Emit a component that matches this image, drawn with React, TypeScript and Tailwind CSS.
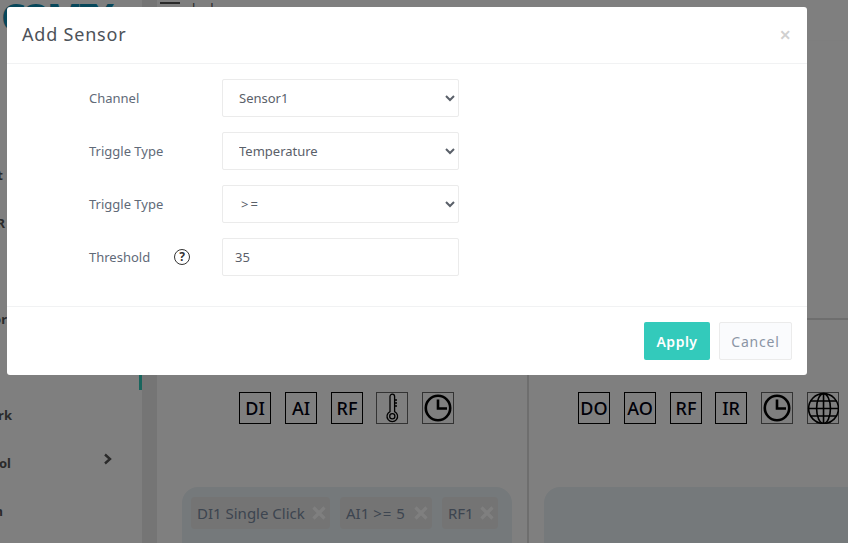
import React from 'react';

const font = { fontFamily: '"Noto Sans", sans-serif' };

// Bloc texte d'un déclencheur
const IconBox = ({ label, className = '' }: { label: string; className?: string }) => (
  <div className={`w-8 h-8 border border-black flex items-center justify-center text-[18px] leading-none font-medium text-[#00000f] ${className}`}>
    {label}
  </div>
);

const ImageBox = ({ children, className = '' }: { children: React.ReactNode; className?: string }) => (
  <div className={`w-8 h-8 border border-[#666666] ${className}`}>{children}</div>
);

const ClockIcon = () => (
  <svg viewBox="0 0 30 30" className="w-full h-full" fill="none" stroke="#000" strokeWidth="2.6">
    <circle cx="15" cy="15" r="12.2" />
    <path d="M15 6.5V15.5H24" />
  </svg>
);

const ThermoIcon = () => (
  <svg viewBox="0 0 30 30" className="w-full h-full" fill="none" stroke="#000" strokeWidth="1.3">
    <path d="M13 3.5a2.3 2.3 0 0 1 4.6 0V18.6a5.3 5.3 0 1 1-4.6 0Z" />
    <circle cx="15.3" cy="23.2" r="2.6" />
    <path d="M18 7h2M18 10h2M18 13h2" />
  </svg>
);

const GlobeIcon = () => (
  <svg viewBox="0 0 30 30" className="w-[32px] h-[32px] -ml-px -mt-px" fill="none" stroke="#000" strokeWidth="1.5">
    <circle cx="15.5" cy="15.5" r="14" />
    <ellipse cx="15.5" cy="15.5" rx="6.5" ry="14" />
    <path d="M15.5 1.5V29.5M1.5 15.5H29.5M3.5 8.5H27.5M3.5 22.5H27.5" />
  </svg>
);

const Chip = ({ children, width }: { children: React.ReactNode; width: string }) => (
  <div className={`${width} h-8 shrink-0 rounded-[4px] bg-[#e8e8e8] flex items-center justify-between pl-[6px] pr-[3px] text-[15px] text-[#7a8aa0]`}>
    <span className="whitespace-nowrap">{children}</span>
    <svg viewBox="0 0 16 16" className="w-4 h-4" stroke="#ffffff" strokeWidth="3.2">
      <path d="M2.5 2.5L13.5 13.5M13.5 2.5L2.5 13.5" />
    </svg>
  </div>
);

// La barre latérale est défilée : seule la fin des libellés reste visible
const SideRow = ({ text, end = 'w-[12px]', chevron }: { text: string; end?: string; chevron?: boolean }) => (
  <div className="h-12 flex items-center">
    <div className={`${end} flex justify-end`}>
      <span className="whitespace-nowrap text-[13px] font-bold text-[#555555]">{text}</span>
    </div>
    {chevron && (
      <svg viewBox="0 0 10 12" className="w-[10px] h-3 ml-[92px] -mt-[10px]" fill="none" stroke="#555555" strokeWidth="2.4">
        <path d="M2 1.5L7 6L2 10.5" />
      </svg>
    )}
  </div>
);

const FormSelect = ({ value, options, className = 'px-3' }: { value: string; options: string[]; className?: string }) => (
  <select
    defaultValue={value}
    className={`w-[237px] h-[38px] bg-white border border-[#ebebeb] rounded-[2px] text-[13px] text-[#5a6069] outline-none ${className}`}
  >
    {options.map((o) => (
      <option key={o}>{o}</option>
    ))}
  </select>
);

const App: React.FC = () => {
  return (
    <div className="relative w-[848px] h-[543px] overflow-hidden bg-white" style={font}>
      {/* Page derrière le modal */}
      <div className="flex h-full">
        <aside className="w-[142px] shrink-0 flex">
          <div className="w-[139px] overflow-hidden">
            <div className="h-[164px] -mt-[12px] pl-[1px] text-[38px] leading-[56px] font-bold text-[#0e8fb5] tracking-[-4px] whitespace-nowrap">
              COMIX
            </div>
            <SideRow text="Port" end="w-[3px]" />
            <SideRow text="LTR" end="w-[5px]" />
            <SideRow text="" />
            <SideRow text="Sensor" end="w-[7px]" />
            <SideRow text="" />
            <SideRow text="Network" />
            <SideRow text="Protocol" end="w-[11px]" chevron />
            <SideRow text="Admin" end="w-[3px]" />
          </div>
          <div className="w-[3px] h-[90px] mt-[300px] bg-[#33cabb]" />
        </aside>
        <div className="w-[15px] shrink-0 bg-[#ebebeb]" />
        <main className="flex-1 min-w-0 flex flex-col">
          <header className="h-[41px] shrink-0 border-b border-[#fdfdfd] flex items-start">
            <div className="w-5 h-[2px] mt-[2px] ml-[3px] bg-[#555555]" />
            <span className="ml-[12px] -mt-[1px] text-[13px] leading-[18px] text-[#555555] tracking-[15px]">ll</span>
          </header>
          <div className="h-[277px] shrink-0" />
          <div className="flex-1 min-h-0 flex border-t-2 border-[#dddddd]">
            <section className="w-[372px] shrink-0 border-r-2 border-[#dddddd]">
              <div className="flex gap-[14px] pl-[82px] pt-[72px]">
                <IconBox label="DI" />
                <IconBox label="AI" />
                <IconBox label="RF" />
                <ImageBox className="-ml-px">
                  <ThermoIcon />
                </ImageBox>
                <ImageBox>
                  <ClockIcon />
                </ImageBox>
              </div>
              <div className="ml-[25px] mt-[63px] w-[330px] h-[120px] rounded-t-[16px] bg-[#eaf2f6] flex gap-[10px] px-[9px] pt-[10px]">
                <Chip width="w-[139px]">DI1 Single Click</Chip>
                <Chip width="w-[92px]">
                  AI1 <span className="tracking-[1px]">&gt;=</span> 5
                </Chip>
                <Chip width="w-[56px]">RF1</Chip>
              </div>
            </section>
            <section className="flex-1 min-w-0">
              <div className="flex gap-[14px] pl-[49px] pt-[72px]">
                <IconBox label="DO" />
                <IconBox label="AO" />
                <IconBox label="RF" />
                <IconBox label="IR" className="-ml-px" />
                <ImageBox>
                  <ClockIcon />
                </ImageBox>
                <ImageBox>
                  <GlobeIcon />
                </ImageBox>
              </div>
              <div className="ml-[15px] mt-[63px] h-[120px] rounded-tl-[16px] bg-[#eaf2f6]" />
            </section>
          </div>
        </main>
      </div>

      {/* Fond sombre */}
      <div className="absolute inset-0 bg-black/50" />

      {/* Modal */}
      <div className="absolute left-[7px] top-[7px] w-[800px] h-[368px] bg-white rounded-[3px] flex flex-col">
        <div className="h-[57px] shrink-0 border-b border-[#f1f2f3] flex items-center justify-between pl-[15px] pr-[15px]">
          <h5 className="text-[18px] text-[#4d5259] tracking-[0.8px] -mt-[2px]">Add Sensor</h5>
          <span className="text-[20px] font-semibold leading-none text-[#d0d0d0] mr-[1px]">×</span>
        </div>
        <div className="flex-1 pl-[82px] pt-[15px] flex flex-col gap-[15px] text-[13px] text-[#616a78]">
          <div className="flex items-center">
            <label className="w-[133px] pt-[2px]">Channel</label>
            <FormSelect value="Sensor1" options={['Sensor1', 'Sensor2']} />
          </div>
          <div className="flex items-center">
            <label className="w-[133px] pt-[2px]">Triggle Type</label>
            <FormSelect value="Temperature" options={['Temperature', 'Humidity']} />
          </div>
          <div className="flex items-center">
            <label className="w-[133px] pt-[2px]">Triggle Type</label>
            <FormSelect value=">=" options={['>=', '<=']} className="pl-[14px] pr-3 tracking-[2px]" />
          </div>
          <div className="flex items-center">
            <label className="w-[85px] pt-[2px]">Threshold</label>
            <span className="w-4 h-4 mr-[32px] rounded-full border border-[#333333] flex items-center justify-center text-[12px] font-bold leading-none text-[#333333]">
              ?
            </span>
            <input
              defaultValue="35"
              className="w-[237px] h-[38px] px-3 bg-white border border-[#ebebeb] rounded-[2px] text-[13px] text-[#5a6069] outline-none"
            />
          </div>
        </div>
        <div className="h-[69px] shrink-0 border-t border-[#f1f2f3] flex items-start justify-end gap-[9px] pt-[15px] pr-[15px]">
          <button className="w-[66px] h-[38px] rounded-[2px] bg-[#33cabb] text-white text-[14px] font-semibold tracking-[0.5px]">
            Apply
          </button>
          <button className="w-[73px] h-[38px] rounded-[2px] bg-[#fafbfd] border border-[#ebebeb] text-[#8b95a5] text-[14px] tracking-[0.8px]">
            Cancel
          </button>
        </div>
      </div>
    </div>
  );
};

export default App;
